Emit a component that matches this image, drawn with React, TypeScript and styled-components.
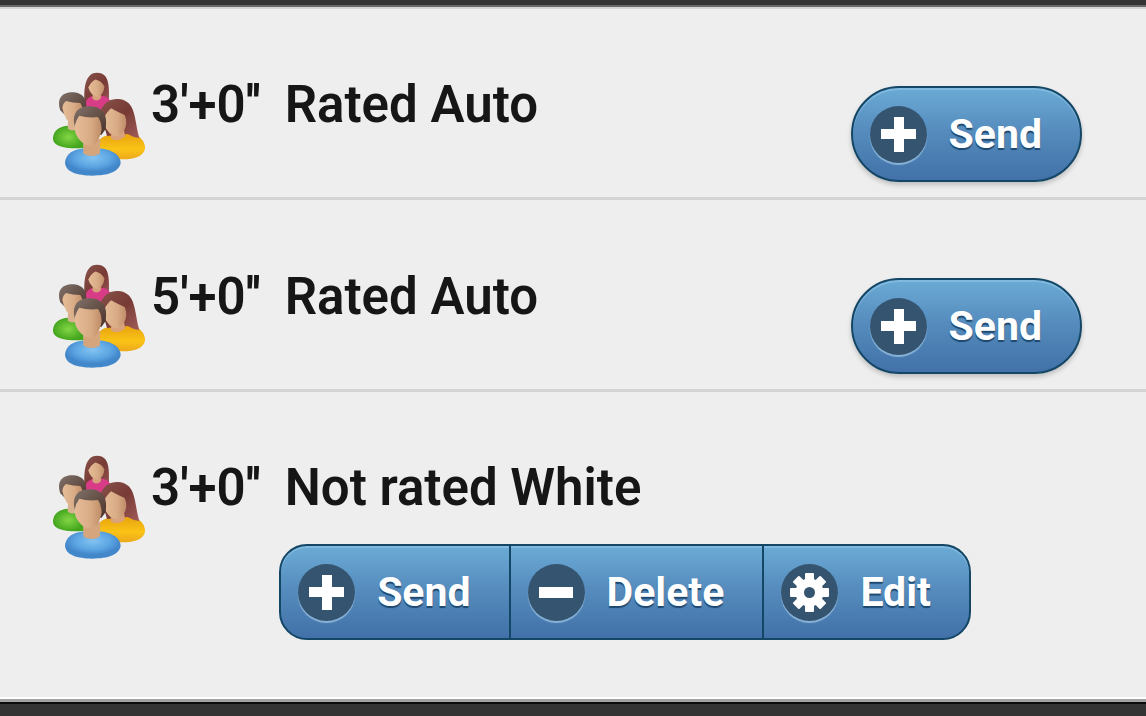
import React from "react";
import styled, { createGlobalStyle, css } from "styled-components";

const GlobalStyle = createGlobalStyle`
  *, *::before, *::after { box-sizing: border-box; }
  body {
    margin: 0;
    background: #333;
    color: #161616;
    font-family: Roboto, "Liberation Sans", sans-serif;
  }
`;

const Page = styled.main`
  padding-top: 5px;
  padding-bottom: 12px;
  background: #333;
`;

const List = styled.ul`
  list-style: none;
  margin: 0;
  padding: 0;
  background: #eee;
  border-top: 2px solid #666;
  border-bottom: 3px solid #a2a2a2;
  box-shadow: inset 0 2px 0 #d4d4d4, 0 2px 0 #0c0c0c;
`;

const Row = styled.li`
  display: flex;
  align-items: flex-start;
  gap: 6px;
  padding: 65px 47px 15px 53px;
  border-bottom: 3px solid #d4d4d4;

  & + & {
    padding-top: 64px;
  }

  &:last-child {
    padding-top: 63px;
    padding-bottom: 57px;
    border-bottom: 2px solid #fff;
  }
`;

const Avatar = styled.svg`
  flex: none;
  width: 92px;
  height: 104px;
`;

const Details = styled.div<{ $stacked?: boolean }>`
  flex: 1;
  display: flex;
  justify-content: space-between;
  align-items: flex-start;
  ${(p) =>
    p.$stacked &&
    css`
      flex-direction: column;
      gap: 27px;
    `}
`;

const Title = styled.h2`
  margin: 0;
  padding-top: 4px;
  font-size: 51px;
  line-height: 58px;
  font-weight: 600;
  white-space: nowrap;
`;

const TimeControl = styled.span`
  display: inline-block;
  min-width: 121px;
`;

const Button = styled.button<{ $single?: boolean }>`
  display: flex;
  align-items: center;
  gap: 22px;
  height: 96px;
  padding: 0 38px 0 17px;
  border: 2px solid #144666;
  border-radius: 0;
  background: linear-gradient(#6cabd6, #568dbe 45%, #4171a8);
  box-shadow: inset 0 2px 0 rgba(150, 200, 230, 0.5);
  color: #fff;
  font-family: inherit;
  font-size: 41px;
  line-height: 48px;
  font-weight: 700;
  text-shadow: 0 2px 1px #1d476e;
  cursor: pointer;
  ${(p) =>
    p.$single &&
    css`
      margin: 14px 17px 0 0;
      border-radius: 48px;
      box-shadow: inset 0 2px 0 rgba(150, 200, 230, 0.5), 0 3px 5px rgba(0, 0, 0, 0.2);
    `}
`;

const ButtonGroup = styled.div`
  display: flex;
  align-self: center;

  ${Button} + ${Button} {
    margin-left: -2px;
  }
  ${Button}:first-child {
    border-radius: 28px 0 0 28px;
  }
  ${Button}:last-child {
    border-radius: 0 28px 28px 0;
  }
`;

const IconDisc = styled.span`
  display: flex;
  flex: none;
  width: 57px;
  height: 57px;
  border-radius: 50%;
  background: #35546f;
  box-shadow: 0 2px 1px rgba(165, 205, 235, 0.7);
`;

type IconName = "plus" | "minus" | "gear";

function Icon({ name }: { name: IconName }) {
  return (
    <IconDisc>
      <svg width="57" height="57" viewBox="0 0 57 57" fill="#fff" aria-hidden="true">
        {name === "plus" && <path d="M24 11h10v12h12v10H34v13H24V33H11V23h13z" />}
        {name === "minus" && <path d="M11 23h34v11H11z" />}
        {name === "gear" && (
          <>
            {[0, 45, 90, 135].map((angle) => (
              <rect key={angle} x="24" y="9" width="9" height="39" rx="1" transform={`rotate(${angle} 28.5 28.5)`} />
            ))}
            <circle cx="28.5" cy="28.5" r="14" />
            <circle cx="28.5" cy="28.5" r="5.5" fill="#35546f" />
          </>
        )}
      </svg>
    </IconDisc>
  );
}

function PeopleIcon() {
  return (
    <Avatar viewBox="39 36 276 309" preserveAspectRatio="none" role="img" aria-label="Players">
      <defs>
        <linearGradient id="skin" x2="1">
          <stop offset="0" stopColor="#e5bd98" />
          <stop offset="0.6" stopColor="#d8ab85" />
          <stop offset="1" stopColor="#bf8c68" />
        </linearGradient>
        <linearGradient id="hair" x2="1" y2="1">
          <stop offset="0" stopColor="#80736a" />
          <stop offset="1" stopColor="#4b3128" />
        </linearGradient>
        <linearGradient id="redHair" x2="1" y2="1">
          <stop offset="0" stopColor="#86534a" />
          <stop offset="0.5" stopColor="#783a35" />
          <stop offset="1" stopColor="#a05c58" />
        </linearGradient>
        <radialGradient id="blue" cy="0.35">
          <stop offset="0" stopColor="#83c3f2" />
          <stop offset="0.65" stopColor="#5ba5e2" />
          <stop offset="1" stopColor="#4387cb" />
        </radialGradient>
        <radialGradient id="green">
          <stop offset="0" stopColor="#83d645" />
          <stop offset="1" stopColor="#43a51d" />
        </radialGradient>
        <linearGradient id="yellow" x2="0" y2="1">
          <stop offset="0" stopColor="#e6a20f" />
          <stop offset="0.6" stopColor="#fbc316" />
          <stop offset="1" stopColor="#eca91c" />
        </linearGradient>
      </defs>
      <path d="M135 140C130 95 132 38 171 38C207 38 208 75 207 118L212 145Z" fill="url(#redHair)" />
      <path d="M135 138C135 119 145 111 158 107L184 106C202 108 215 119 214 139L202 155H160Z" fill="#d83c87" />
      <path d="M159 96L157 115Q170 127 183 113L182 94Z" fill="#d7a17e" />
      <path d="M145 82Q152 66 166 58Q184 62 193 78Q192 100 174 110Q152 107 145 82Z" fill="url(#skin)" />
      <path d="M39 232C40 209 61 197 84 196L124 201L132 262C90 265 38 262 39 232Z" fill="url(#green)" />
      <path d="M61 150C48 112 69 94 101 96C130 98 144 119 137 151L121 176L74 163Z" fill="url(#hair)" />
      <path d="M84 180L83 204Q96 216 118 203L121 175Z" fill="#d9b28f" />
      <path d="M67 143Q68 130 78 122Q98 128 121 128Q134 145 124 173Q111 193 97 191Q76 184 67 143Z" fill="url(#skin)" />
      <path d="M171 256C171 235 191 225 215 221L269 218C294 223 316 237 315 263C311 290 271 298 236 295L200 277Z" fill="url(#yellow)" />
      <path d="M180 154C191 128 208 115 235 116C274 120 281 147 288 187Q293 217 298 232Q279 230 263 220L201 226Z" fill="url(#redHair)" />
      <path d="M217 203L212 233Q231 247 255 228L251 199Z" fill="#d9a27b" />
      <path d="M190 178Q196 160 213 144Q233 155 254 164Q265 189 252 209Q238 233 219 225Q195 212 190 178Z" fill="url(#skin)" />
      <path d="M75 306C76 278 101 266 130 263L184 263C217 268 241 282 242 306C238 333 204 344 157 344C112 344 77 334 75 306Z" fill="url(#blue)" />
      <path d="M106 204C93 161 111 138 149 138C187 138 205 163 196 207L184 223L112 211Z" fill="url(#hair)" />
      <path d="M130 238L130 278Q154 293 180 278L181 235Z" fill="#d5a57d" />
      <path d="M103 204Q106 181 118 166Q144 174 174 170Q184 183 185 206Q181 232 169 246Q154 259 138 252Q109 239 103 204Z" fill="url(#skin)" />
    </Avatar>
  );
}

interface Action {
  label: string;
  icon: IconName;
}

const send: Action = { label: "Send", icon: "plus" };
const remove: Action = { label: "Delete", icon: "minus" };
const edit: Action = { label: "Edit", icon: "gear" };

const challenges: { time: string; mode: string; actions: Action[] }[] = [
  { time: "3'+0''", mode: "Rated Auto", actions: [send] },
  { time: "5'+0''", mode: "Rated Auto", actions: [send] },
  { time: "3'+0''", mode: "Not rated White", actions: [send, remove, edit] },
];

function ActionButton({ action, single }: { action: Action; single?: boolean }) {
  return (
    <Button type="button" $single={single}>
      <Icon name={action.icon} />
      {action.label}
    </Button>
  );
}

export default function App() {
  return (
    <>
      <GlobalStyle />
      <Page>
        <List>
          {challenges.map(({ time, mode, actions }) => {
            const single = actions.length === 1;
            return (
              <Row key={`${time} ${mode}`}>
                <PeopleIcon />
                <Details $stacked={!single}>
                  <Title>
                    <TimeControl>{time}</TimeControl> {mode}
                  </Title>
                  {single ? (
                    <ActionButton action={actions[0]} single />
                  ) : (
                    <ButtonGroup>
                      {actions.map((action) => (
                        <ActionButton key={action.label} action={action} />
                      ))}
                    </ButtonGroup>
                  )}
                </Details>
              </Row>
            );
          })}
        </List>
      </Page>
    </>
  );
}
